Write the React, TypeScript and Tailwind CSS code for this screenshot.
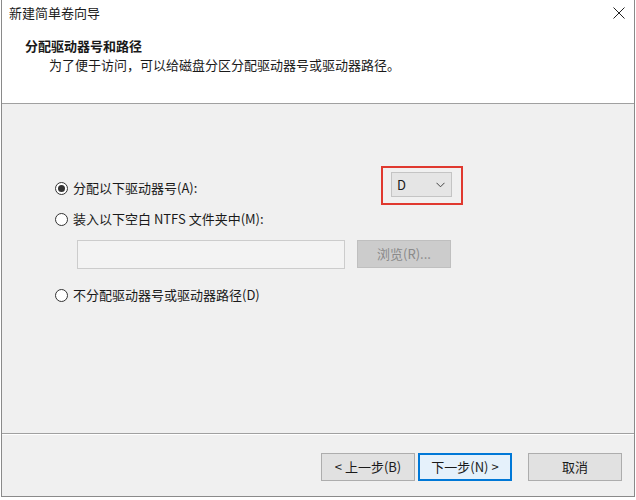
import React from "react";

const font = { fontFamily: '"Noto Sans CJK SC", "Microsoft YaHei", sans-serif' };

function Radio({ checked, label }: { checked?: boolean; label: string }) {
  return (
    <div className="flex items-center h-[16px] gap-[5px]">
      <span className="w-[13px] h-[13px] rounded-full border border-[#333333] bg-white flex items-center justify-center">
        {checked && <span className="w-[7px] h-[7px] rounded-full bg-[#333333]" />}
      </span>
      <span className="text-[13px] leading-[16px] text-[#1a1a1a]">{label}</span>
    </div>
  );
}

export default function App() {
  return (
    <div className="w-[636px] h-[500px] bg-white overflow-hidden" style={font}>
      <div className="ml-[1px] w-[634px] h-[497px] border-l border-r border-b border-[#8a8a8a] flex flex-col">
        {/* title bar */}
        <div className="h-[26px] flex items-center justify-between bg-white">
          <span className="pl-[7px] text-[13px] leading-[16px] text-[#1a1a1a]">新建简单卷向导</span>
          <svg width="12" height="12" viewBox="0 0 12 12" className="mr-[9px]">
            <path d="M0.5 0.5 L11.5 11.5 M11.5 0.5 L0.5 11.5" stroke="#222" strokeWidth="1" />
          </svg>
        </div>
        {/* header */}
        <div className="h-[78px] bg-white border-b border-[#a0a0a0] pt-[10px] pl-[23px] flex flex-col">
          <div className="text-[13px] leading-[19px] font-bold text-[#1a1a1a]">分配驱动器号和路径</div>
          <div className="pl-[24px] text-[13px] leading-[19px] text-[#1a1a1a]">为了便于访问，可以给磁盘分区分配驱动器号或驱动器路径。</div>
        </div>
        {/* content */}
        <div className="flex-1 bg-[#f0f0f0] border-b border-[#a0a0a0] pt-[62px] pl-[53px] flex flex-col">
          <div className="flex items-start">
            <div className="mt-[14px] w-[326px]">
              <Radio checked label="分配以下驱动器号(A):" />
            </div>
            <div className="w-[82px] h-[39px] border-2 border-[#e0392f] pl-[8px] pt-[4px]">
              <div className="w-[61px] h-[25px] bg-[#e5e5e5] border border-[#c4c4c4] flex items-center justify-between pl-[5px] pr-[6px]">
                <span className="text-[13px] leading-[16px] text-[#1a1a1a]">D</span>
                <svg width="9" height="6" viewBox="0 0 9 6">
                  <path d="M0.5 0.8 L4.5 4.8 L8.5 0.8" stroke="#444" strokeWidth="1" fill="none" />
                </svg>
              </div>
            </div>
          </div>
          <div className="mt-[6px]">
            <Radio label="装入以下空白 NTFS 文件夹中(M):" />
          </div>
          <div className="mt-[13px] ml-[22px] flex gap-[12px]">
            <div className="w-[268px] h-[29px] bg-[#f3f3f3] border border-[#cccccc]" />
            <div className="w-[94px] h-[28px] bg-[#cccccc] border border-[#bfbfbf] flex items-center justify-center text-[13px] text-[#8a8a8a]">
              浏览(R)...
            </div>
          </div>
          <div className="mt-[18px]">
            <Radio label="不分配驱动器号或驱动器路径(D)" />
          </div>
        </div>
        {/* footer */}
        <div className="h-[62px] bg-[#f0f0f0] border-t border-white flex justify-end items-start pt-[18px] pr-[12px]">
          <div className="w-[94px] h-[28px] bg-[#e1e1e1] border border-[#adadad] flex items-center justify-center text-[13px] text-[#1a1a1a]">
            &lt; 上一步(B)
          </div>
          <div className="ml-[3px] w-[94px] h-[28px] bg-[#e5f1fb] border-2 border-[#0078d7] flex items-center justify-center text-[13px] text-[#1a1a1a]">
            下一步(N) &gt;
          </div>
          <div className="ml-[16px] w-[94px] h-[28px] bg-[#e1e1e1] border border-[#adadad] flex items-center justify-center text-[13px] text-[#1a1a1a]">
            取消
          </div>
        </div>
      </div>
    </div>
  );
}
